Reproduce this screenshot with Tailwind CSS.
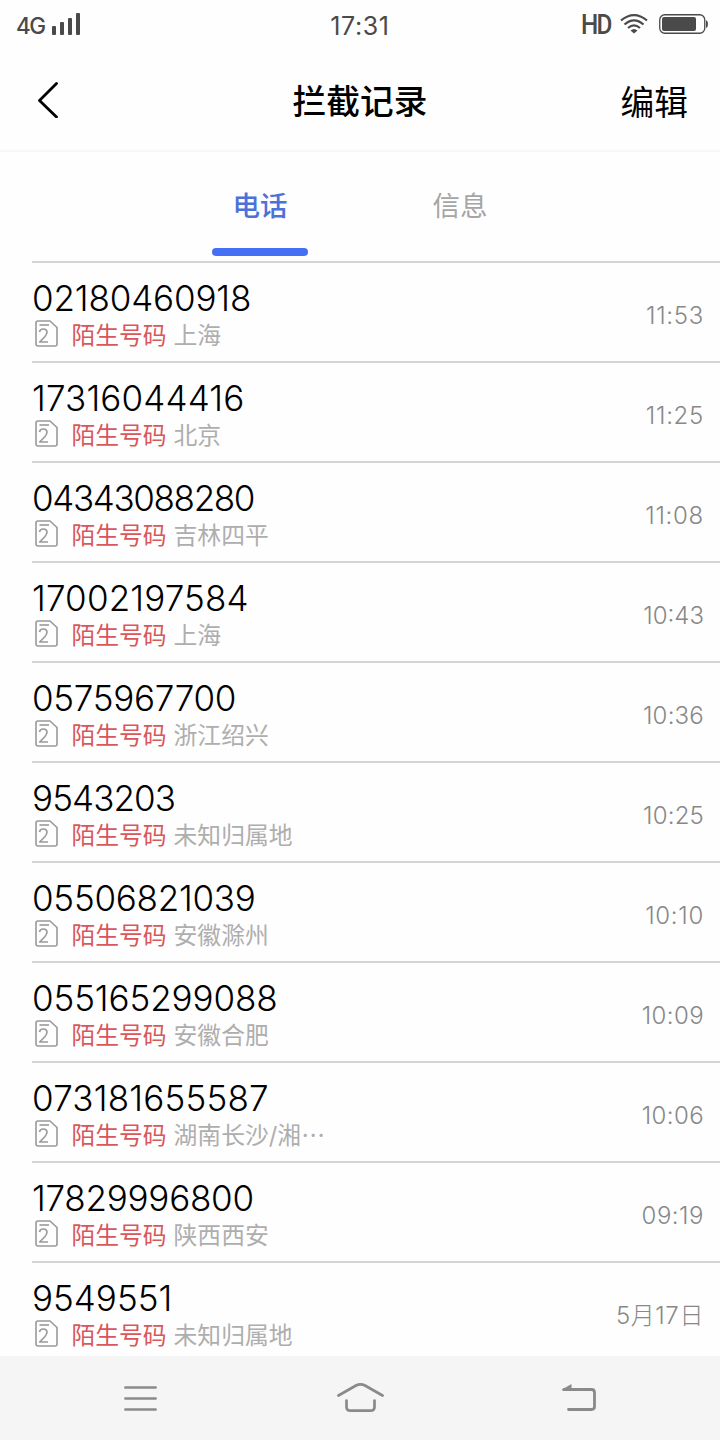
<!DOCTYPE html>
<html lang="zh-CN">
<head>
    <meta charset="UTF-8">
    <meta name="viewport" content="width=device-width, initial-scale=1.0">
    <title>拦截记录</title>
    <script src="https://cdn.jsdelivr.net/npm/@tailwindcss/browser@4"></script>
</head>
<body class="bg-[#fefefe] font-['Inter','Noto_Sans_CJK_SC',sans-serif]">

    <div class="w-[720px] h-[1440px] flex flex-col overflow-hidden">

        <!-- Status bar -->
        <div class="h-[50px] shrink-0 grid grid-cols-3 items-center pl-4 pr-3 text-[#4a4a4a]">
            <div class="flex items-center gap-[7px]">
                <span class="text-[22.5px] leading-none font-medium tracking-[-1.5px] pt-[3px]">4G</span>
                <svg class="w-[29px] h-[22px] -mt-0.5" viewBox="0 0 29 22" fill="currentColor">
                    <rect x="0" y="13" width="4" height="9" rx="1" />
                    <rect x="8" y="9" width="4" height="13" rx="1" />
                    <rect x="16" y="5" width="4" height="17" rx="1" />
                    <rect x="24" y="0" width="4" height="22" rx="1" />
                </svg>
            </div>
            <div class="text-center text-[25px] leading-none tracking-[0.6px] pt-0.5 pr-1">17:31</div>
            <div class="flex items-center justify-end">
                <span class="font-['Roboto',sans-serif] text-[27px] leading-none font-medium tracking-[-2px] mr-2 w-[31px] origin-left scale-x-90">HD</span>
                <svg class="w-7 h-5 mr-[11px] -mt-0.5" viewBox="0 0 28 20" fill="none" stroke="currentColor" stroke-width="2.200">
                    <path d="M1 6.500Q14 -4.200 27 6.500" />
                    <path d="M4.500 10.500Q14 2.200 23.500 10.500" />
                    <path d="M8 14Q14 8.800 20 14" />
                    <path d="M10.500 16.500Q14 13.500 17.500 16.500L14 19.500Z" fill="currentColor" stroke="none" />
                </svg>
                <svg class="w-[49px] h-5 -mt-0.5" viewBox="0 0 49 20">
                    <rect x="0.750" y="0.750" width="45" height="18.500" rx="5" fill="none" stroke="currentColor" stroke-width="1.300" />
                    <rect x="3" y="3" width="34" height="14" rx="2" fill="currentColor" />
                    <path d="M47 6Q49 7 49 10T47 14Z" fill="currentColor" />
                </svg>
            </div>
        </div>

        <!-- Title bar -->
        <div class="h-[102px] shrink-0 grid grid-cols-[200px_1fr_200px] items-center px-8 border-b-2 border-[#f7f7f7] text-black">
            <svg class="w-[22px] h-9 ml-1" viewBox="0 0 22 36" fill="none" stroke="currentColor" stroke-width="2.800" stroke-linecap="round" stroke-linejoin="round">
                <path d="M20.500 1.500L3.500 18.500L20.500 35" />
            </svg>
            <h1 class="text-center text-[33.7px] leading-none font-medium pt-[3px]">拦截记录</h1>
            <button class="text-right text-[33.7px] leading-none pt-[5px]">编辑</button>
        </div>

        <!-- Tabs -->
        <div class="h-[109px] shrink-0 flex pl-40 text-[27.5px] leading-none">
            <div class="w-[200px] flex flex-col items-center pt-[41px]">
                <span class="text-[#4c71d8] font-medium">电话</span>
                <span class="w-24 h-2 mt-[27px] rounded-full bg-[#456ff5]"></span>
            </div>
            <div class="w-[200px] text-center pt-[41px] text-[#a5a5a5]">信息</div>
        </div>

        <!-- Blocked calls -->
        <ul id="callList" class="flex-1 overflow-hidden pl-8"></ul>

        <!-- Navigation bar -->
        <div class="h-[84px] shrink-0 bg-[#f5f5f5] flex items-center justify-around px-[30px] text-[#8a8a8a]">
            <svg class="w-12 h-8" viewBox="0 0 48 32" fill="none" stroke="currentColor" stroke-width="2.700" stroke-linecap="round">
                <path d="M9.400 5.500H39.600M9.400 16.500H39.600M9.400 27.500H39.600" />
            </svg>
            <svg class="w-12 h-8" viewBox="0 0 48 32" fill="none" stroke="currentColor" stroke-width="2.700" stroke-linecap="round">
                <path d="M2.500 13.500L20 3.500Q24.500 1.200 29 3.500L46.500 13.500" />
                <path d="M10.500 18.500V25Q10.500 28.700 14.500 28.700H34.500Q38.500 28.700 38.500 25V18.500" />
            </svg>
            <svg class="w-12 h-8" viewBox="0 0 48 32" fill="none" stroke="currentColor" stroke-width="2.800" stroke-linecap="round">
                <path d="M8 7.500H35.500Q38.500 7.500 38.500 10.500V24.500Q38.500 27.500 35.500 27.500H12.500" />
                <path d="M6 8.500V7.500L15.500 2V8.500Z" fill="currentColor" stroke="none" />
            </svg>
        </div>
    </div>

    <script>
        // spacing / timeSpacing: letter spacing in px
        const calls = [
            { number: "02180460918", spacing: -0.15, place: "上海", time: "11:53", timeSpacing: 0.7 },
            { number: "17316044416", spacing: 0.15, place: "北京", time: "11:25", timeSpacing: 0.7 },
            { number: "04343088280", spacing: -1.35, place: "吉林四平", time: "11:08", timeSpacing: 0.7 },
            { number: "17002197584", spacing: 0.15, place: "上海", time: "10:43", timeSpacing: 0 },
            { number: "0575967700", spacing: -0.3, place: "浙江绍兴", time: "10:36", timeSpacing: 0.2 },
            { number: "9543203", spacing: -0.9, place: "未知归属地", time: "10:25", timeSpacing: 0.2 },
            { number: "05506821039", spacing: -0.25, place: "安徽滁州", time: "10:10", timeSpacing: 0.7 },
            { number: "055165299088", spacing: -0.1, place: "安徽合肥", time: "10:09", timeSpacing: 0.4 },
            { number: "073181655587", spacing: 0.2, place: "湖南长沙/湘⋯", time: "10:06", timeSpacing: 0.4 },
            { number: "17829996800", spacing: -0.25, place: "陕西西安", time: "09:19", timeSpacing: 0.5 },
            { number: "9549551", spacing: 0, place: "未知归属地", time: "5月17日", timeSpacing: 0.6 }
        ];

        document.getElementById("callList").innerHTML = calls.map(call => `
            <li class="h-[100px] flex items-center justify-between border-t-2 border-[#d5d5d5] pr-4">
                <div class="pt-1">
                    <div class="text-[35px] leading-[42px] text-black font-light" style="letter-spacing: ${call.spacing}px">${call.number}</div>
                    <div class="flex items-center h-8 text-[23.8px] leading-8 whitespace-nowrap">
                        <svg class="w-[23px] h-[27px] ml-[3px] mr-[13.400px] -mt-1 text-[#999999]" viewBox="0 0 23 27" fill="none" stroke="currentColor" stroke-width="1.600" stroke-linejoin="round">
                            <path d="M3 1H15L22 7.500V24Q22 26 20 26H3Q1 26 1 24V3Q1 1 3 1Z" />
                            <path d="M4.500 5H14" />
                            <path d="M4.500 12Q5 9 8.200 9Q12 9 12 12.300Q12 14 10 16.500L4.700 22H13" />
                        </svg>
                        <span class="text-[#d9575b] pt-0.5">陌生号码</span>
                        <span class="ml-[7px] pt-0.5 text-[#aeaeae]">${call.place}</span>
                    </div>
                </div>
                <div class="text-[24px] text-[#888888] font-light pt-2 whitespace-nowrap" style="letter-spacing: ${call.timeSpacing}px">${call.time}</div>
            </li>`).join('');
    </script>
</body>
</html>
